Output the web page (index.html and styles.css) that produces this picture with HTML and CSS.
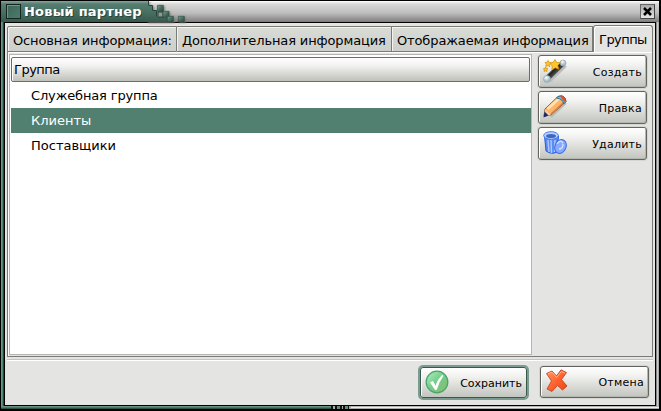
FILE: index.html
```html
<!DOCTYPE html>
<html lang="ru">
<head>
<meta charset="utf-8">
<title>Новый партнер</title>
<link rel="stylesheet" href="styles.css">
</head>
<body>
<div class="window">
  <header class="titlebar">
    <div class="caption"><span class="sysmenu"></span><span class="title">Новый партнер</span></div>
    <svg class="pixels" width="44" height="21" viewBox="0 0 44 21">
      <defs><linearGradient id="t" x1="0" y1="0" x2="0" y2="1"><stop offset="0" stop-color="#87a79b"/><stop offset=".15" stop-color="#557e70"/><stop offset=".6" stop-color="#446f60"/><stop offset="1" stop-color="#38594c"/></linearGradient>
      <linearGradient id="p" x1="0" y1="0" x2="1" y2="1"><stop offset="0" stop-color="#79a192"/><stop offset=".5" stop-color="#47705f"/><stop offset="1" stop-color="#294a3d"/></linearGradient></defs>
      <path d="M0 0h1v5h4v5h5v6h11v5H0z" fill="url(#t)"/>
      <path d="M1.500 0v4.500h4v5h4v6" fill="none" stroke="#29443a"/>
      <path d="M11 11h5v5h-5z" fill="#8e9994" stroke="#29443a"/>
      <g fill="url(#p)" stroke="#2b463b" stroke-width=".6"><path d="M10.300 4.300h6v6h-6z"/><path d="M16 10.300h6v6h-6z"/><path d="M20.300 15.300h6v5.400h-6z"/><path d="M31.300 15.300h6v5.400h-6z"/></g>
    </svg>
    <button class="close" aria-label="Закрыть"><svg width="9" height="9" viewBox="0 0 9 9"><path d="M1 1l7 7M8 1L1 8" stroke="#000" stroke-width="2.500"/></svg></button>
  </header>
  <main class="content">
    <nav class="tabs">
      <div class="tab t1"><span>Основная информация:</span></div>
      <div class="tab t2"><span>Дополнительная информация</span></div>
      <div class="tab t3"><span>Отображаемая информация</span></div>
      <div class="tab active"><span>Группы</span></div>
    </nav>
    <section class="pane">
      <div class="list">
        <div class="head">Группа</div>
        <div class="row r1">Служебная группа</div>
        <div class="row selected">Клиенты</div>
        <div class="row r3">Поставщики</div>
      </div>
      <div class="actions">
        <button class="btn"><svg width="24" height="24" viewBox="0 0 24 24">
          <defs><linearGradient id="w" gradientUnits="userSpaceOnUse" x1="9" y1="9" x2="14" y2="14"><stop offset="0" stop-color="#999"/><stop offset=".4" stop-color="#222"/><stop offset="1" stop-color="#555"/></linearGradient>
          <radialGradient id="b" cx=".4" cy=".3"><stop offset="0" stop-color="#fff"/><stop offset="1" stop-color="#a5bdc8"/></radialGradient></defs>
          <path d="M6 21.500L22 6" stroke="#bbb" stroke-width="5"/><path d="M4 19.500L20 4" stroke="url(#w)" stroke-width="5.500"/>
          <circle cx="4" cy="20" r="3.500" fill="url(#b)" stroke="#8ba2ad" stroke-width=".6"/><circle cx="20" cy="4" r="3" fill="url(#b)" stroke="#8ba2ad" stroke-width=".6"/>
          <g fill="#ffc62a" stroke="#d58a00" stroke-width=".7"><path d="M12 .500l1.700 3 3.800.3-2.700 2.700 1 3.800-3.600-1.500-3.300 2 .3-3.800L6.500 4l3.600-.6z"/><path d="M5 1.500l1 2 2.300.5-1.800 1.500.3 2.300L5 6.600 2.700 7.500l.6-2.400L2 3.500l2-.2z"/><path d="M2.500 8l.7 1.500 1.800.2-1.300 1.100.3 1.800-1.500-.9-1.500.8.3-1.700L.3 9.700l1.600-.2z"/></g></svg><span>Создать</span></button>
        <button class="btn"><svg width="24" height="24" viewBox="0 0 24 24">
          <path d="M8 22L23 8" stroke="#b9b9b5" stroke-width="2"/>
          <path d="M1 21L2 14 15 1.500q7-2.500 8 5L8 20z" fill="#ffb467" stroke="#915528"/>
          <path d="M4.500 14L16 3.500" stroke="#ffe2af" stroke-width="3"/><path d="M8 19L21 7" stroke="#dc8243" stroke-width="1.500"/>
          <path d="M13.500 3L15 1.500q7-2.500 8 5L20.500 9q0-5-7-6z" fill="#62c6ef" stroke="#267199"/><path d="M17 1.200q5-1 5.500 4.800L21.500 7z" fill="#df512c"/>
          <path d="M2 14l6 6-7 1.500z" fill="#e9cfae"/><path d="M1.500 16.500l4 4L.5 22.500z" fill="#222961"/></svg><span>Правка</span></button>
        <button class="btn"><svg width="24" height="24" viewBox="0 0 24 24">
          <path d="M1.500 5l1.500 15q5.500 4 11 1L15.500 5z" fill="#5c8bf2" stroke="#285fd8"/><path d="M5 9l1 12M8 9l.5 13M12 9l-.5 12" stroke="#adc9ff" stroke-width="1.400"/>
          <ellipse cx="8" cy="4.500" rx="7.300" ry="3.800" fill="#c0d3ff" stroke="#477be9"/><ellipse cx="8" cy="5" rx="5" ry="2.100" fill="#3f67c5"/>
          <ellipse cx="17.500" cy="15.500" rx="5.500" ry="7.200" transform="rotate(24 17.500 15.500)" fill="#87aaff" stroke="#3a6ce1"/><path d="M14 13q3-5 6-1M16 18q4 0 4-5" stroke="#d7e4ff" stroke-width="1.300" fill="none"/></svg><span>Удалить</span></button>
      </div>
    </section>
    <footer class="footer">
      <button class="btn default"><svg width="24" height="24" viewBox="0 0 24 24">
        <defs><linearGradient id="g" x1="0" y1="0" x2="1" y2="1"><stop offset="0" stop-color="#b0f1c0"/><stop offset=".5" stop-color="#72cb87"/><stop offset="1" stop-color="#8bbc70"/></linearGradient></defs>
        <circle cx="12" cy="12" r="10.800" fill="url(#g)" stroke="#4aa36d" stroke-width="1.300"/><path d="M5.500 12.500l2.500-1 2.500 5Q13 9 17.500 5l.5 1Q13.500 12 11.500 19.500H10z" fill="#fff" stroke="#fff" stroke-width=".8"/></svg><span>Сохранить</span></button>
      <button class="btn cancel"><svg width="24" height="24" viewBox="0 0 24 24">
        <defs><linearGradient id="r" x1="0" y1="0" x2="1" y2="1"><stop offset="0" stop-color="#ff9b64"/><stop offset=".5" stop-color="#ff632f"/><stop offset="1" stop-color="#e94311"/></linearGradient></defs>
        <path d="M1.500 4.500L7 2l4.500 5L16 .800l5.500 2.800-5 7L22 17l-4.500 4-5-4.500L7 22.500 2 20l4.500-8z" fill="url(#r)" stroke="#bd3b18" stroke-width=".8" stroke-linejoin="round"/><path d="M3 5l4-1.800 4.500 5.300L16.500 2.500l3.500 1.800" fill="none" stroke="#ffb58a"/></svg><span>Отмена</span></button>
    </footer>
  </main>
  <div class="bottom"><div class="grip"></div></div>
</div>
</body>
</html>
```
FILE: styles.css
```css
* { box-sizing: border-box; }
body { margin: 0; background: #000; font: 13px/17px "DejaVu Sans", sans-serif; color: #000; overflow: hidden; }
.window { width: 661px; height: 411px; padding: 1px 2px 2px 1px; display: flex; flex-direction: column; background: #000; }
.titlebar { height: 21px; flex: none; display: flex; background: linear-gradient(#fff 0, #d8d8d8 3px, #bdbdbd 12px, #858585 20px, #777); }
.caption { width: 146px; display: flex; padding: 3px 0 0 5px; background: linear-gradient(#87a79b 0, #557e70 3px, #446f60 12px, #38594c 21px); }
.sysmenu { width: 15px; height: 15px; background: linear-gradient(135deg, #3c6557, #4c7c6c); border: 1px solid #152620; box-shadow: inset 1px 1px #719689; }
.title { margin: -1px 0 0 3px; font-weight: bold; color: #fff; letter-spacing: .2px; text-shadow: 1px 1px #28443a; white-space: nowrap; }
.pixels { display: block; filter: drop-shadow(1px 1px 1px #777); }
.close { width: 15px; height: 15px; margin: 3px 4px 0 auto; padding: 0; border: 1px solid; border-color: #666 #444 #444 #666; background: linear-gradient(#aaa, #e5e5e5); display: flex; align-items: center; justify-content: center; }
.content { height: 384px; flex: none; border: 1px solid #000; margin: 0 3px; background: #e4e4e2; padding: 2px 2px 0; display: flex; flex-direction: column; box-shadow: -1px 0 #27473b, -2px 0 #4f8271, -3px 0 #6d9688, 1px 0 #888, 2px 0 #ccc, 3px 0 #aaa; }
.tabs { display: flex; height: 27px; align-items: flex-end; position: relative; z-index: 1; }
.tab { height: 26px; border: 1px solid #797b74; border-left: 0; padding: 5px 0 0 5px; background: linear-gradient(#d9dbd7, #cdcfca); box-shadow: inset 1px 1px #f3f3f1; white-space: nowrap; letter-spacing: -.13px; }
.t1 { width: 170px; border-left: 1px solid #797b74; border-top-left-radius: 2px; }
.t2 { width: 215px; }
.t3 { width: 201px; }
.active { width: 60px; height: 27px; align-self: flex-start; border: 1px solid #797b74; border-bottom: 0; border-radius: 3px 3px 0 0; background: #e4e4e2; box-shadow: inset 1px 1px #fff; padding: 5px 0 0 5px; letter-spacing: -.55px; }
.pane { height: 306px; margin-top: -1px; display: flex; gap: 6px; border: 1px solid #797b74; border-top-color: #fff; width: 646px; padding: 1px 5px 2px 1px; box-shadow: inset 1px 1px #fff; }
.list { width: 523px; height: 301px; border: 1px solid #b5b6b2; background: #fff; padding: 2px 0 0 1px; margin-top: 1px; flex: none; }
.head { width: 519px; height: 25px; border: 1px solid #6b6d65; border-radius: 2px; background: linear-gradient(#fff, #f1f1ef 35%, #bfc1bb); padding: 3px 0 0 2px; box-shadow: inset 1px 0 #fff; letter-spacing: -.5px; }
.row { height: 25px; padding: 4px 0 0 20px; }
.r1 { margin-top: 1px; letter-spacing: -.15px; }
.selected { background: #528070; color: #fff; }
.actions { display: flex; flex-direction: column; gap: 3px; padding-top: 2px; }
.btn { width: 109px; height: 33px; flex: none; padding: 1px 4px 2px 3px; border: 1px solid #62645d; border-radius: 3px; background: linear-gradient(#fff, #f1f1ef 30%, #c2c4be); box-shadow: inset 1px 1px #fff, inset -1px -1px #b4b6b1, 0 0 0 1px #d5d5d2; font: 11px/15px "DejaVu Sans", sans-serif; color: #000; display: flex; align-items: center; justify-content: space-between; letter-spacing: .25px; }
.btn svg { flex: none; margin-top: -1px; margin-left: 1px; }
.btn span { margin-top: 2px; }
.footer { margin-top: 2px; border-top: 1px solid #c4c5c1; box-shadow: inset 0 1px #fff; padding: 7px 4px 0 0; height: 44px; display: flex; justify-content: flex-end; gap: 13px; }
.default { width: 107px; height: 31px; border-color: #38594c; box-shadow: inset 1px 1px #fff, 0 0 0 2px #7c9b90; letter-spacing: 0; padding-bottom: 1px; }
.cancel { height: 32px; margin-top: -1px; }
.bottom { height: 3px; margin-top: auto; background: linear-gradient(#759e90, #456f60 60%, #203c32) 0 0 / 331px 3px no-repeat, linear-gradient(#999, #eee 50%, #888); }
.grip { margin-left: 330px; width: 20px; height: 3px; background: linear-gradient(90deg, #111 0 2px, #aaa 2px 4px, #111 4px 6px, #5c8f7e 6px 9px, #111 9px 11px, #aaa 11px 12px, #111 12px 14px, #5c8f7e 14px 17px, #111 17px 18px, #aaa 18px); }
```
